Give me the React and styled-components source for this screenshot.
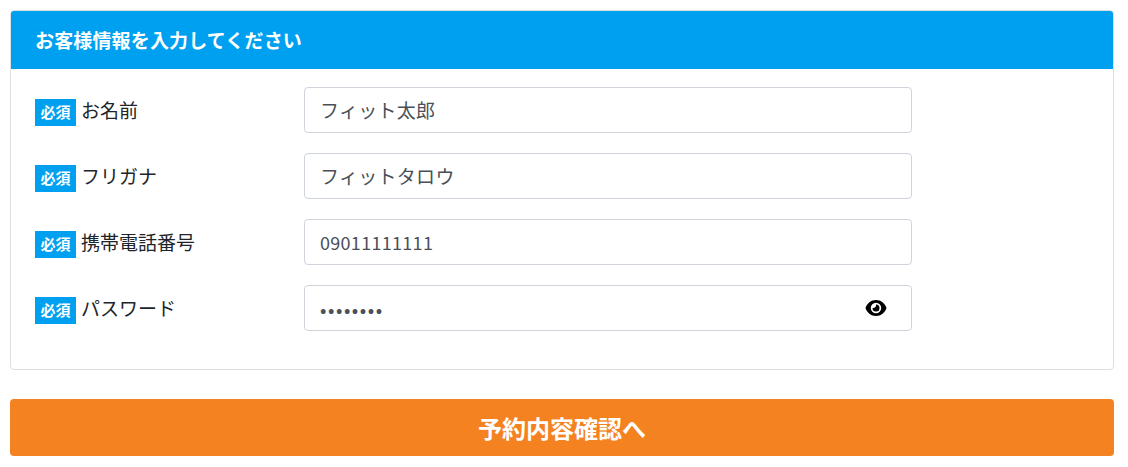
import React from "react";
import styled, { createGlobalStyle } from "styled-components";

const Global = createGlobalStyle`
  html, body { margin: 0; padding: 0; background: #fff; }
  body { font-family: "Noto Sans CJK JP", "Noto Sans", sans-serif; }
  * { box-sizing: border-box; }
`;
const Page = styled.div`
  padding: 10px 14px 11px 10px;
  display: flex;
  flex-direction: column;
  gap: 29px;
`;
const Card = styled.section`
  border: 1px solid #dcdfe3;
  border-radius: 4px;
  overflow: hidden;
  height: 360px;
`;
const Head = styled.h2`
  margin: 0;
  height: 58px;
  background: #00a0f0;
  color: #fff;
  font-size: 19px;
  font-weight: 700;
  letter-spacing: 0.15px;
  line-height: 57px;
  padding-left: 24px;
`;
const Form = styled.div`
  padding: 18px 0 0 24px;
  display: flex;
  flex-direction: column;
  gap: 20px;
`;
const Row = styled.div`
  display: flex;
  align-items: center;
  height: 46px;
`;
const LabelBox = styled.div`
  width: 269px;
  display: flex;
  align-items: center;
  gap: 5px;
  margin-bottom: 2px;
  font-size: 19px;
  color: #212529;
`;
const Badge = styled.span`
  width: 41px;
  height: 27px;
  padding-bottom: 2px;
  background: #00a0f0;
  color: #fff;
  font-size: 15px;
  font-weight: 700;
  display: flex;
  align-items: center;
  justify-content: center;
  margin-top: 7px;
`;
const Field = styled.div`
  position: relative;
  width: 608px;
  height: 46px;
`;
const Input = styled.input`
  width: 100%;
  height: 100%;
  border: 1px solid #ced4da;
  border-radius: 4px;
  padding: 0 15px ${(p) => (p.$digits || p.type === "password" ? "0" : "2px")};
  font-family: inherit;
  font-size: ${(p) => (p.$digits ? "18px" : "19px")};
  letter-spacing: ${(p) => (p.type === "password" ? "1.5px" : "0.3px")};
  color: #495057;
  outline: none;
`;
const Eye = styled.svg`
  position: absolute;
  right: 25px;
  top: 14px;
  width: 22px;
  height: 18px;
`;
const Submit = styled.button`
  height: 57px;
  border: 0;
  border-radius: 4px;
  background: #f58220;
  color: #fff;
  font-family: inherit;
  font-size: 24px;
  font-weight: 700;
`;

const fields = [
  ["お名前", "フィット太郎", "text"],
  ["フリガナ", "フィットタロウ", "text"],
  ["携帯電話番号", "09011111111", "text", true],
  ["パスワード", "password", "password"],
];

export default function App() {
  return (
    <Page>
      <Global />
      <Card>
        <Head>お客様情報を入力してください</Head>
        <Form>
          {fields.map(([label, value, type, digits]) => (
            <Row key={label}>
              <LabelBox>
                <Badge>必須</Badge>
                {label}
              </LabelBox>
              <Field>
                <Input type={type} defaultValue={value} $digits={digits} />
                {type === "password" && (
                  <Eye viewBox="0 0 22 18">
                    <path fillRule="evenodd" d="M11 1C6 1 2 4.500 0.500 9 2 13.500 6 17 11 17s9-3.500 10.500-8C20 4.500 16 1 11 1zm0 2.800a5.200 5.200 0 1 1 0 10.400 5.200 5.200 0 0 1 0-10.400z" fill="#000" />
                    <path d="M11 5.500a3.500 3.500 0 1 1-3.500 3.500c1.700.6 4.100-1.200 3.500-3.500z" fill="#000" />
                  </Eye>
                )}
              </Field>
            </Row>
          ))}
        </Form>
      </Card>
      <Submit>予約内容確認へ</Submit>
    </Page>
  );
}
